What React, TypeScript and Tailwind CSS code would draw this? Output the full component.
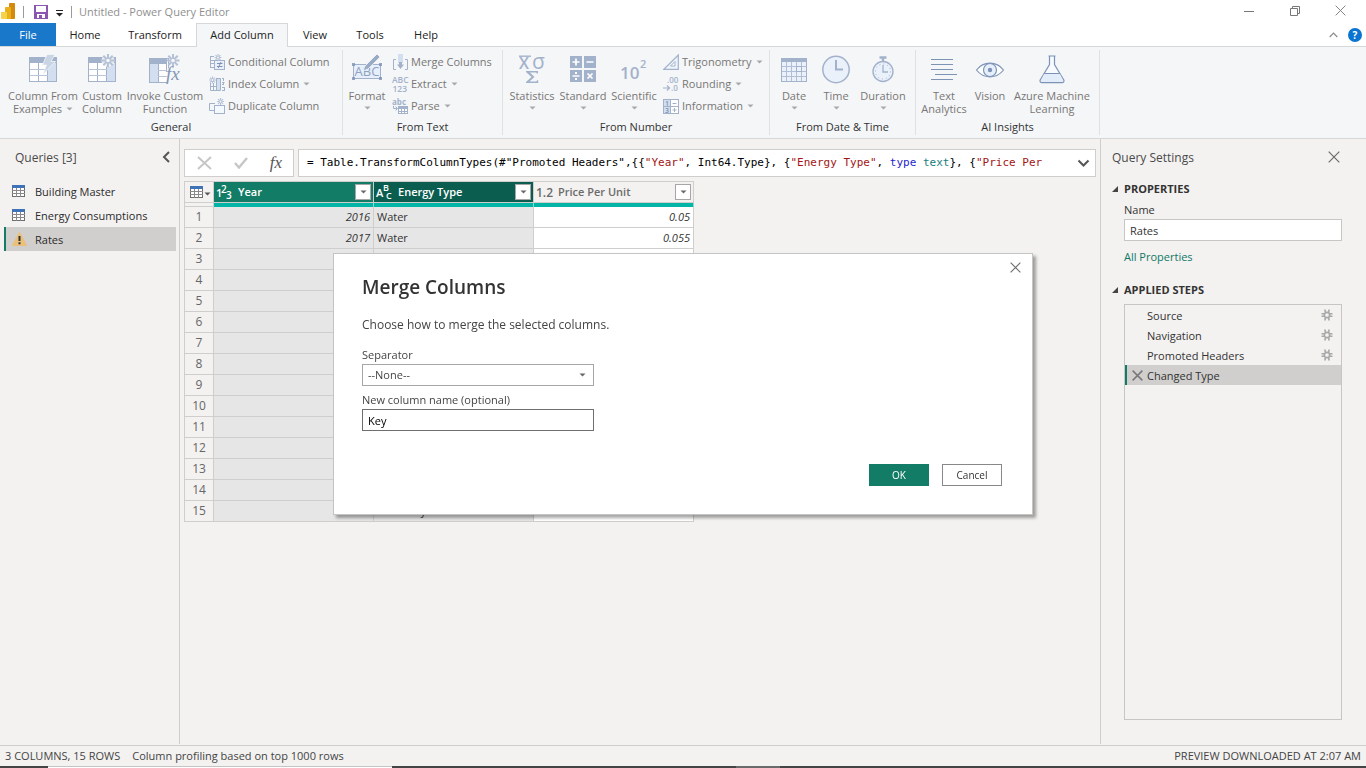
import type { ReactNode } from 'react';

const LINE = '#a3b2cb';
const TINT = '#d3deee';
const DEEP = '#7d93b5';

function Caret({ className = 'text-[#a8a8a8]' }: { className?: string }) {
  return (
    <svg width="7" height="4" viewBox="0 0 7 4" className={`shrink-0 ${className}`} aria-hidden="true">
      <path d="M0.5 0.5h6L3.5 3.6z" fill="currentColor" />
    </svg>
  );
}

function Burst({ x, y, r = 6.5 }: { x: number; y: number; r?: number }) {
  const d = r * 0.72;
  return (
    <g transform={`translate(${x} ${y})`}>
      <path
        d={`M0 ${-r}V${r}M${-r} 0H${r}M${-d} ${-d}L${d} ${d}M${d} ${-d}L${-d} ${d}`}
        stroke="#b4c1d6"
        strokeWidth={r > 4 ? 2 : 1.1}
        fill="none"
      />
      <circle r={r * 0.28} fill="#f4f6f8" />
    </g>
  );
}

function TableBase() {
  return (
    <>
      <rect x="0.5" y="3.5" width="27" height="24" fill="#fff" stroke={LINE} />
      <rect x="19" y="9" width="8" height="18" fill={TINT} />
      <rect x="0" y="3" width="28" height="6" fill={LINE} />
      <path d="M9.5 9v19M18.5 9v19" stroke={LINE} />
      <path d="M1 15.5h18M1 21.5h18" stroke="#b9c6da" />
    </>
  );
}

function ExamplesIcon() {
  return (
    <svg width="28" height="29" viewBox="0 0 28 29">
      <TableBase />
      <path d="M18 0.5h8l-4 7h4.5L14 20.5l3.5-9.5h-4z" fill="#c9d4e5" stroke="#f4f6f8" strokeWidth="0.8" />
    </svg>
  );
}
function CustomIcon() {
  return (
    <svg width="28" height="29" viewBox="0 0 28 29">
      <TableBase />
      <circle cx="20" cy="6.500" r="6.500" fill="#f4f6f8" opacity="0.850" />
      <Burst x={20} y={6.5} />
    </svg>
  );
}
function InvokeIcon() {
  return (
    <svg width="32" height="30" viewBox="0 0 32 30" className="overflow-visible">
      <rect x="0.500" y="4.500" width="19" height="24" fill="#fff" stroke={LINE} />
      <rect x="0" y="4" width="18" height="6" fill={LINE} />
      <rect x="1" y="10" width="8" height="18" fill={TINT} />
      <path d="M9.500 10v19M17.500 10v8" stroke={LINE} />
      <path d="M9 16.500h10M9 22.500h10" stroke="#b9c6da" />
      <Burst x={24} y={6.5} />
      <rect x="18" y="14" width="13" height="15.500" fill="#f4f6f8" opacity="0.800" />
      <text x="17" y="26" fontFamily="Liberation Serif, serif" fontStyle="italic" fontSize="19" fill="#8597b5">fx</text>
    </svg>
  );
}
function ConditionalIcon() {
  return (
    <svg width="16" height="16" viewBox="0 0 16 16">
      <path d="M5 2.500H1M1.500 2v11M1 6.500h4M1 9.500h4M1 13.500h4" stroke={LINE} fill="none" />
      <rect x="5.500" y="6.500" width="10" height="9" fill="#e9f0fa" stroke={LINE} />
      <path d="M8 9.500h5.500M8 12.500h5.500M12 8l-2.800 6" stroke={DEEP} fill="none" />
      <Burst x={9} y={3.5} r={3.4} />
    </svg>
  );
}
function IndexIcon() {
  return (
    <svg width="16" height="16" viewBox="0 0 16 16">
      <path d="M1.500 6.500v8h10v-12H7M1 10.500h10M4.500 7v8M7.500 3v12" stroke={LINE} fill="none" />
      <rect x="8" y="3" width="3" height="11" fill={TINT} />
      <path d="M13 2.500h2M14.500 2v3M13 6.500h2.500M13 8.500h2M14.500 6v3M13 11.500h2.500M13 14.500h2.500M15.500 11v4" stroke={LINE} fill="none" />
      <Burst x={3.5} y={4} r={3.4} />
    </svg>
  );
}
function DuplicateIcon() {
  return (
    <svg width="16" height="16" viewBox="0 0 16 16">
      <path d="M6 5.500H0.500v7H5" stroke={LINE} fill="none" />
      <rect x="5.500" y="7.500" width="10" height="8" fill="#f4f8ff" stroke={LINE} />
      <Burst x={11.5} y={3.5} r={3.4} />
    </svg>
  );
}
function FormatIcon() {
  return (
    <svg width="32" height="29" viewBox="0 0 32 29" className="overflow-visible">
      <rect x="2.500" y="10.500" width="27" height="14" fill="#e6effb" stroke={LINE} />
      <g fill={DEEP} opacity="0.8">
        <rect x="1" y="9" width="3" height="3" /><rect x="28" y="9" width="3" height="3" />
        <rect x="1" y="23" width="3" height="3" /><rect x="28" y="23" width="3" height="3" />
      </g>
      <text x="16" y="22" textAnchor="middle" fontFamily="Open Sans, sans-serif" fontSize="13" fill="#8fa2c0">ABC</text>
      <path d="M26 0l3 3-12 12-5 2 2-5z" fill="#9aabc6" stroke="#f4f6f8" strokeWidth="0.8" />
    </svg>
  );
}
function MergeIcon() {
  return (
    <svg width="17" height="16" viewBox="0 0 17 16">
      <path d="M4 5.500H1.500v10H4M13 5.500h2.500v10H13" stroke={LINE} fill="none" />
      <rect x="6" y="0" width="5" height="9" fill={TINT} />
      <path d="M8.500 15L5 10.500h2V8h3v2.500h2z" fill={LINE} />
    </svg>
  );
}
function ExtractIcon() {
  return (
    <svg width="17" height="16" viewBox="0 0 17 16" className="overflow-visible" fontFamily="Open Sans, sans-serif" fontSize="8.500" fontWeight="600" fill={LINE}>
      <text x="0" y="7">ABC</text>
      <text x="0.500" y="15.500">123</text>
    </svg>
  );
}
function ParseIcon() {
  return (
    <svg width="17" height="17" viewBox="0 0 17 17" className="overflow-visible">
      <text x="0" y="6.500" fontFamily="Open Sans, sans-serif" fontSize="8" fontWeight="700" fill={LINE}>abc</text>
      <path d="M1.500 8v2.500H5M3.500 8.500l2 2-2 2" stroke={LINE} fill="none" />
      <rect x="6.500" y="8.500" width="9" height="7" fill="#fff" stroke={LINE} />
      <rect x="6" y="8" width="10" height="3" fill={LINE} />
      <path d="M9.500 10v6M12.500 10v6M6 13.500h10" stroke={LINE} />
    </svg>
  );
}
function StatisticsIcon() {
  return (
    <svg width="30" height="30" viewBox="0 0 30 30" className="overflow-visible" fill={LINE} fontFamily="Open Sans, sans-serif">
      <path d="M2 2.200h12" stroke={LINE} strokeWidth="1.400" />
      <text x="2" y="15" fontSize="16" fontWeight="600">X</text>
      <text x="15" y="15" fontSize="21" fontWeight="500">σ</text>
      <path d="M9 17h12v2.500h-1.200l-.5-1H13l4.500 4.500-5 4.500h7l.5-1.200h1.200V29H9v-1l5.500-5L9 18z" />
    </svg>
  );
}
function StandardIcon() {
  return (
    <svg width="27" height="28" viewBox="0 0 27 28">
      <g fill={LINE}>
        <rect x="0" y="2" width="12" height="12" /><rect x="14" y="2" width="12" height="12" />
        <rect x="0" y="16" width="12" height="12" /><rect x="14" y="16" width="12" height="12" />
      </g>
      <path d="M6 4.500v7M2.500 8h7M16.500 8h7M2.500 22h7M17.500 19.500l5 5M22.500 19.500l-5 5" stroke="#fff" strokeWidth="1.700" />
      <path d="M5 18h2v2H5zM5 24h2v2H5z" fill="#fff" />
    </svg>
  );
}
function ScientificIcon() {
  return (
    <svg width="28" height="30" viewBox="0 0 28 30" className="overflow-visible" fill={LINE} fontFamily="Open Sans, sans-serif" fontWeight="600">
      <text x="0" y="25" fontSize="17">10</text>
      <text x="20" y="14" fontSize="11">2</text>
    </svg>
  );
}
function TrigIcon() {
  return (
    <svg width="16" height="16" viewBox="0 0 16 16">
      <path d="M15.300 1V15.400H0.800z" fill="#eef4fc" stroke={LINE} strokeWidth="1.200" />
      <path d="M12 7.500v4.500H7.500z" fill="#fff" stroke={LINE} />
    </svg>
  );
}
function RoundingIcon() {
  return (
    <svg width="16" height="16" viewBox="0 0 16 16" className="overflow-visible" fontFamily="Open Sans, sans-serif" fontSize="8" fontWeight="600" fill={LINE}>
      <text x="4" y="7">.00</text>
      <text x="8" y="15">.0</text>
      <path d="M0 12h6M4 9.500L6.500 12 4 14.500" stroke={LINE} strokeWidth="1.200" fill="none" />
    </svg>
  );
}
function InformationIcon() {
  return (
    <svg width="16" height="16" viewBox="0 0 16 16" className="overflow-visible">
      <rect x="0.500" y="1.500" width="15" height="14" fill="#fff" stroke={LINE} />
      <rect x="1" y="2" width="6" height="13" fill={TINT} />
      <path d="M7.500 1v15M0 8.500h16M9.500 5.500h4M9.500 12h4M11.500 10v4" stroke={LINE} />
      <text x="2" y="7.500" fontFamily="Open Sans, sans-serif" fontSize="7" fontWeight="600" fill={DEEP}>1</text>
      <text x="2" y="14.500" fontFamily="Open Sans, sans-serif" fontSize="7" fontWeight="600" fill={DEEP}>3</text>
    </svg>
  );
}
function DateIcon() {
  return (
    <svg width="26" height="29" viewBox="0 0 26 29">
      <rect x="0.500" y="4.500" width="25" height="23" fill="#eaf1fb" stroke={LINE} />
      <rect x="0" y="4" width="26" height="4" fill={LINE} />
      <path d="M5.500 8v19M10.500 8v19M15.500 8v19M20.500 8v19M1 12.500h24M1 17.500h24M1 22.500h24" stroke={LINE} opacity="0.800" />
      <rect x="15.500" y="12.500" width="5" height="5" fill="none" stroke={LINE} />
    </svg>
  );
}
function TimeIcon() {
  return (
    <svg width="28" height="30" viewBox="0 0 28 30">
      <circle cx="14" cy="15.500" r="13.200" fill="#eaf1fb" stroke={LINE} strokeWidth="1.500" />
      <path d="M14 6v9.500h7" stroke={LINE} strokeWidth="2" fill="none" />
    </svg>
  );
}
function DurationIcon() {
  return (
    <svg width="22" height="29" viewBox="0 0 22 29">
      <path d="M7.500 3.500h7M11 3v4" stroke={LINE} strokeWidth="2.400" />
      <circle cx="11" cy="17.500" r="10" fill="#eaf1fb" stroke={LINE} strokeWidth="1.400" />
      <circle cx="11" cy="17.500" r="7.500" fill="none" stroke={LINE} strokeDasharray="1 2.930" />
      <path d="M11 11v7h5" stroke={LINE} strokeWidth="1.300" fill="none" />
    </svg>
  );
}
function TextLinesIcon() {
  return (
    <svg width="28" height="28" viewBox="0 0 28 28">
      <path d="M1 5.500h22M1 10.500h22M1 15.500h22M5 20.500h22M1 25.500h22" stroke={DEEP} />
    </svg>
  );
}
function VisionIcon() {
  return (
    <svg width="30" height="30" viewBox="0 0 30 30">
      <path d="M1.500 16C5 11.500 9.500 9.200 15 9.200S25 11.500 28.500 16C25 20.500 20.500 22.800 15 22.800S5 20.500 1.500 16z" fill="#fff" stroke={DEEP} strokeWidth="1.200" />
      <circle cx="15" cy="16" r="6.500" fill="#e6effc" stroke={DEEP} strokeWidth="1.200" />
      <circle cx="15" cy="16" r="2.200" fill={DEEP} />
    </svg>
  );
}
function FlaskIcon() {
  return (
    <svg width="26" height="30" viewBox="0 0 26 30">
      <path d="M9.500 2h7M10.500 2v8.500L1.200 26c-.6 1.500.3 2.700 1.800 2.700h20c1.500 0 2.400-1.200 1.800-2.700L15.500 10.500V2" fill="#f7faff" stroke={DEEP} strokeWidth="1.200" />
      <path d="M5.200 19.500h15.600L24 26.500c.3 1-.2 1.500-1 1.500H3c-.8 0-1.300-.5-1-1.500z" fill="#e3edfa" />
      <path d="M5 19.500h16" stroke={DEEP} />
    </svg>
  );
}

function BigButton({ icon, lines, caret, width }: { icon: ReactNode; lines: string[]; caret?: boolean; width: string }) {
  return (
    <button type="button" className={`flex shrink-0 flex-col items-center whitespace-nowrap leading-[13px] ${width}`}>
      <span className="flex h-[35px] items-start justify-center" aria-hidden="true">{icon}</span>
      <span>{lines[0]}</span>
      <span className={`flex items-center gap-1 ${lines[1] ? 'h-[13px]' : 'h-[11px]'}`}>
        {lines[1]}
        {caret && <Caret />}
      </span>
    </button>
  );
}

function SmallButton({ icon, label, caret }: { icon: ReactNode; label: string; caret?: boolean }) {
  return (
    <button type="button" className="flex h-[22px] items-center whitespace-nowrap">
      <span className="w-[19px] shrink-0" aria-hidden="true">{icon}</span>
      <span>{label}</span>
      {caret && <span className="ml-1 flex"><Caret /></span>}
    </button>
  );
}

function Group({ title, width, children }: { title: string; width: string; children: ReactNode }) {
  return (
    <section className={`flex shrink-0 flex-col border-r border-[#dfe1e3] ${width}`}>
      <div className="flex h-[72px] items-start px-1 pt-1">{children}</div>
      <h2 className="text-center leading-4 text-[#333]">{title}</h2>
    </section>
  );
}

function SmallStack({ className, children }: { className?: string; children: ReactNode }) {
  return <div className={`-mt-[3px] flex h-[66px] flex-col ${className ?? ''}`}>{children}</div>;
}

function SheetIcon() {
  return (
    <svg width="14" height="13" viewBox="0 0 14 13" aria-hidden="true">
      <rect x="0.500" y="0.500" width="12" height="11" fill="#fff" stroke="#6e6e6e" />
      <rect x="0" y="0" width="13" height="3" fill="#3f73b8" />
      <path d="M4.500 3v9M8.500 3v9M0 5.500h13M0 8.500h13" stroke="#8a8a8a" />
    </svg>
  );
}
function WarningIcon() {
  return (
    <svg width="15" height="14" viewBox="0 0 15 14" aria-hidden="true">
      <path d="M7.500 0.800L14.300 13.200H0.700z" fill="#e9c07c" stroke="#e9c07c" strokeWidth="1.400" strokeLinejoin="round" />
      <path d="M7.500 4v5M7.500 10.200v2" stroke="#333" strokeWidth="2" />
    </svg>
  );
}
function CrossIcon({ size, color = '#6a6a6a', width = 1.2 }: { size: number; color?: string; width?: number }) {
  return (
    <svg width={size} height={size} viewBox="0 0 12 12" aria-hidden="true">
      <path d="M0.700 0.700l10.600 10.600M11.300 0.700L0.700 11.300" stroke={color} strokeWidth={width} fill="none" />
    </svg>
  );
}
function GearIcon() {
  return (
    <svg width="12" height="12" viewBox="0 0 12 12" aria-hidden="true">
      <circle cx="6" cy="6" r="2.700" stroke="#a9a9a9" strokeWidth="1.700" fill="none" />
      <path d="M3.800 0.500l.7 3M8.200 0.500l-.7 3M3.800 11.500l.7-3M8.200 11.500l-.7-3M0.500 4.700h3M0.500 7.300h3M8.500 4.700h3M8.500 7.300h3" stroke="#a9a9a9" strokeWidth="1.600" />
    </svg>
  );
}

function TitleBar() {
  return (
    <header className="flex h-[23px] items-center bg-white">
      <svg width="16" height="17" viewBox="0 0 16 17" className="ml-px shrink-0" aria-hidden="true">
        <rect x="8" y="0" width="6" height="16" rx="0.800" fill="#d48a0c" />
        <rect x="4" y="4" width="6" height="12" rx="0.800" fill="#e8b01a" />
        <rect x="0" y="9" width="6" height="7" rx="0.800" fill="#f6d24b" />
      </svg>
      <span className="ml-[6px] h-3 w-px bg-[#9a9a9a]" />
      <button type="button" aria-label="Save" className="ml-[10px]">
        <svg width="14" height="14" viewBox="0 0 14 14">
          <path d="M0 0h14v14H0z" fill="#8a56b0" />
          <path d="M2 1h10v6H2z" fill="#fff" />
          <path d="M3 9h8v4H3z" fill="#fff" />
          <path d="M5 10h3v3H5z" fill="#8a56b0" />
        </svg>
      </button>
      <button type="button" aria-label="Customize toolbar" className="ml-2 mt-[3px]">
        <svg width="7" height="7" viewBox="0 0 7 7"><path d="M0 0.500h7" stroke="#222" /><path d="M0 3h7L3.500 6.500z" fill="#222" /></svg>
      </button>
      <span className="ml-2 h-3 w-px bg-[#9a9a9a]" />
      <h1 className="ml-[7px] pt-px text-[11px] text-[#8f8f8f]">Untitled - Power Query Editor</h1>
      <div className="ml-auto flex items-center gap-[34px] pr-5 pb-[2px]">
        <button type="button" aria-label="Minimize">
          <svg width="12" height="12" viewBox="0 0 12 12"><path d="M1 6.500h10" stroke="#777" /></svg>
        </button>
        <button type="button" aria-label="Restore">
          <svg width="12" height="12" viewBox="0 0 12 12">
            <path d="M1.500 3.500h7v7h-7zM3.500 3V1.500h7v7H9" fill="none" stroke="#777" />
          </svg>
        </button>
        <button type="button" aria-label="Close"><CrossIcon size={11} color="#777" width={1} /></button>
      </div>
    </header>
  );
}

const tabs = [
  { label: 'File', width: 'w-[56px]' },
  { label: 'Home', width: 'w-[58px]' },
  { label: 'Transform', width: 'w-[82px]' },
  { label: 'Add Column', width: 'w-[92px]' },
  { label: 'View', width: 'w-[54px]' },
  { label: 'Tools', width: 'w-[56px]' },
  { label: 'Help', width: 'w-[56px]' },
];

function Tabs() {
  return (
    <nav className="flex h-[24px] items-stretch bg-white text-[11px] text-[#222]">
      {tabs.map((t) => {
        const tone =
          t.label === 'File'
            ? 'bg-[#1a78cb] text-white border-b border-[#d5d7d9] pt-[2px]'
            : t.label === 'Add Column'
              ? 'bg-[#f4f6f8] border border-b-0 border-[#d5d7d9]'
              : 'border-b border-[#d5d7d9] pt-[2px]';
        return (
          <button key={t.label} type="button" className={`shrink-0 ${t.width} ${tone}`}>
            {t.label}
          </button>
        );
      })}
      <div className="flex flex-1 items-center justify-end gap-[10px] border-b border-[#d5d7d9] pr-1">
        <button type="button" aria-label="Collapse ribbon">
          <svg width="9" height="6" viewBox="0 0 9 6"><path d="M0.700 5L4.500 1.200 8.300 5" stroke="#8a8a8a" strokeWidth="1.200" fill="none" /></svg>
        </button>
        <button type="button" aria-label="Help" className="size-[14px] rounded-full bg-[#0a74d1] text-[10px] leading-[14px] font-bold text-white">?</button>
      </div>
    </nav>
  );
}

function Ribbon() {
  return (
    <div className="flex h-[92px] overflow-hidden border-b border-[#d5d7d9] bg-[#f4f6f8] py-[3px] text-[11px] text-[#797675]">
      <Group title="General" width="w-[343px]">
        <BigButton width="w-[78px]" icon={<ExamplesIcon />} lines={['Column From', 'Examples']} caret />
        <BigButton width="w-[40px]" icon={<CustomIcon />} lines={['Custom', 'Column']} />
        <BigButton width="w-[86px]" icon={<InvokeIcon />} lines={['Invoke Custom', 'Function']} />
        <SmallStack className="ml-px">
          <SmallButton icon={<ConditionalIcon />} label="Conditional Column" />
          <SmallButton icon={<IndexIcon />} label="Index Column" caret />
          <SmallButton icon={<DuplicateIcon />} label="Duplicate Column" />
        </SmallStack>
      </Group>
      <Group title="From Text" width="w-[160px]">
        <BigButton width="w-[40px]" icon={<FormatIcon />} lines={['Format', '']} caret />
        <SmallStack className="ml-[5px]">
          <SmallButton icon={<MergeIcon />} label="Merge Columns" />
          <SmallButton icon={<ExtractIcon />} label="Extract" caret />
          <SmallButton icon={<ParseIcon />} label="Parse" caret />
        </SmallStack>
      </Group>
      <Group title="From Number" width="w-[267px]">
        <BigButton width="w-[50px]" icon={<StatisticsIcon />} lines={['Statistics', '']} caret />
        <BigButton width="w-[52px]" icon={<StandardIcon />} lines={['Standard', '']} caret />
        <BigButton width="w-[50px]" icon={<ScientificIcon />} lines={['Scientific', '']} caret />
        <SmallStack className="ml-1">
          <SmallButton icon={<TrigIcon />} label="Trigonometry" caret />
          <SmallButton icon={<RoundingIcon />} label="Rounding" caret />
          <SmallButton icon={<InformationIcon />} label="Information" caret />
        </SmallStack>
      </Group>
      <Group title="From Date & Time" width="w-[146px]">
        <BigButton width="w-[40px]" icon={<DateIcon />} lines={['Date', '']} caret />
        <BigButton width="w-[44px]" icon={<TimeIcon />} lines={['Time', '']} caret />
        <BigButton width="w-[50px]" icon={<DurationIcon />} lines={['Duration', '']} caret />
      </Group>
      <Group title="AI Insights" width="w-[184px]">
        <BigButton width="w-[48px]" icon={<TextLinesIcon />} lines={['Text', 'Analytics']} />
        <BigButton width="w-[44px]" icon={<VisionIcon />} lines={['Vision', '']} />
        <BigButton width="w-[80px]" icon={<FlaskIcon />} lines={['Azure Machine', 'Learning']} />
      </Group>
    </div>
  );
}

function QueriesPane() {
  const queries = ['Building Master', 'Energy Consumptions', 'Rates'];
  return (
    <aside className="flex w-[180px] shrink-0 flex-col border-r border-[#cfcecc]">
      <div className="flex h-9 items-center justify-between pr-2 pl-[15px]">
        <h2 className="pt-[2px] text-[12px] text-[#4a4a4a]">Queries [3]</h2>
        <button type="button" aria-label="Collapse queries">
          <svg width="9" height="12" viewBox="0 0 9 12"><path d="M7 1L2 6l5 5" stroke="#555" strokeWidth="2" fill="none" /></svg>
        </button>
      </div>
      <ul className="mt-[4px] mr-[3px] ml-1 text-[11px] text-[#2b2b2b]">
        {queries.map((q) => (
          <li key={q}>
            <button
              type="button"
              className={`flex h-6 w-full items-center border-l-2 pl-[6px] ${q === 'Rates' ? 'border-[#127c66] bg-[#d0cfcd]' : 'border-transparent'}`}
            >
              <span className="w-[23px]">{q === 'Rates' ? <WarningIcon /> : <SheetIcon />}</span>
              <span className="pt-[2px]">{q}</span>
            </button>
          </li>
        ))}
      </ul>
    </aside>
  );
}

function FormulaBar() {
  return (
    <div className="flex h-7 gap-1">
      <div className="flex w-[110px] shrink-0 items-center justify-between border border-[#cfcecc] bg-white pr-[11px] pl-[12px]">
        <button type="button" aria-label="Cancel formula">
          <svg width="15" height="14" viewBox="0 0 15 14"><path d="M1 1l13 12M14 1L1 13" stroke="#c6c6c6" strokeWidth="2" /></svg>
        </button>
        <button type="button" aria-label="Accept formula">
          <svg width="14" height="12" viewBox="0 0 14 12"><path d="M1 6l4 4.500L13 1" stroke="#c6c6c6" strokeWidth="2.400" fill="none" /></svg>
        </button>
        <button type="button" aria-label="Insert step" className="font-['Liberation_Serif',serif] text-[17px] leading-5 text-[#555] italic">fx</button>
      </div>
      <div className="flex min-w-0 flex-1 items-center justify-between border border-[#cfcecc] bg-white pr-[5px] pl-2">
        <code className="overflow-hidden pt-px font-['DejaVu_Sans_Mono',monospace] text-[11px] whitespace-pre text-black">
          {'= Table.TransformColumnTypes(#"Promoted Headers",{{'}
          <span className="text-[#a31515]">"Year"</span>
          {', Int64.Type}, {'}
          <span className="text-[#a31515]">"Energy Type"</span>
          {', '}
          <span className="text-[#1f1fd0]">type</span> <span className="text-[#16807c]">text</span>
          {'}, {'}
          <span className="text-[#a31515]">"Price Per</span>
        </code>
        <button type="button" aria-label="Expand formula bar" className="shrink-0">
          <svg width="13" height="9" viewBox="0 0 13 9"><path d="M1.500 1.500l5 5 5-5" stroke="#555" strokeWidth="2" fill="none" /></svg>
        </button>
      </div>
    </div>
  );
}

type Row = { year?: string; type?: string; price?: string };

const ROW_COUNT = 15;
const loaded: Record<number, Row> = {
  1: { year: '2016', type: 'Water', price: '0.05' },
  2: { year: '2017', type: 'Water', price: '0.055' },
  15: { type: 'Electricity' },
};
const rows: Row[] = Array.from({ length: ROW_COUNT }, (_, i) => loaded[i + 1] ?? {});

const columns = [
  { name: 'Year', tone: 'bg-[#127c66] text-white' },
  { name: 'Energy Type', tone: 'bg-[#0b5d50] text-white' },
  { name: 'Price Per Unit', tone: 'bg-[#f3f2f1] text-[#6b6b6b]' },
];

function TypeIcon({ index }: { index: number }) {
  return (
    <svg width="19" height="18" viewBox="0 0 19 18" className="overflow-visible" fontFamily="Open Sans, sans-serif" fontWeight="600" fill="currentColor" aria-hidden="true">
      {index === 0 && (<><text x="0" y="14" fontSize="11">1</text><text x="5" y="10" fontSize="10">2</text><text x="10" y="16" fontSize="10">3</text></>)}
      {index === 1 && (<><text x="0" y="14" fontSize="11">A</text><text x="7" y="8" fontSize="9">B</text><text x="10" y="16" fontSize="9">C</text></>)}
      {index === 2 && <text x="0" y="14" fontSize="12">1.2</text>}
    </svg>
  );
}

function DataGrid() {
  return (
    <table className="mt-1 w-[510px] table-fixed border-separate border-spacing-0 border-t border-l border-[#cfcecc] text-[11px] text-[#333]">
      <colgroup>
        <col className="w-[29px]" />
        <col className="w-[160px]" />
        <col className="w-[160px]" />
        <col className="w-[160px]" />
      </colgroup>
      <thead>
        <tr className="h-[21px]">
          <th className="border-r border-b border-[#cfcecc] p-0">
            <button type="button" aria-label="Table options" className="flex items-center pl-[5px]">
              <SheetIcon />
              <Caret className="mt-1 text-[#555]" />
            </button>
          </th>
          {columns.map((c, i) => (
            <th key={c.name} scope="col" className={`border-r border-b border-[#cfcecc] p-0 ${c.tone}`}>
              <div className="flex h-5 items-center pr-[2px] pl-[2px]">
                <TypeIcon index={i} />
                <span className="ml-[3px] pt-px font-semibold">{c.name}</span>
                <button type="button" aria-label={`Filter ${c.name}`} className="ml-auto flex size-4 items-center justify-center border border-[#a6a6a6] bg-white">
                  <Caret className="text-[#6a6a6a]" />
                </button>
              </div>
            </th>
          ))}
        </tr>
      </thead>
      <tbody>
        <tr className="h-1">
          <td className="border-r border-b border-[#cfcecc] p-0" />
          <td className="border-r border-[#8fd6cd] bg-[#03b5a6] p-0" />
          <td className="border-r border-[#8fd6cd] bg-[#03b5a6] p-0" />
          <td className="border-r border-[#8fd6cd] bg-[#03b5a6] p-0" />
        </tr>
        {rows.map(({ year, type, price }, i) => (
          <tr key={i} className="h-[21px] leading-5">
            <th scope="row" className="border-r border-b border-[#cfcecc] p-0 text-[12px] font-normal text-[#666]">{i + 1}</th>
            <td className="border-r border-b border-[#cfcecc] bg-[#e6e6e6] p-0 pr-[3px] text-right italic">{year}</td>
            <td className="border-r border-b border-[#cfcecc] bg-[#e6e6e6] p-0 pl-[3px]">{type}</td>
            <td className="border-r border-b border-[#cfcecc] bg-white p-0 pr-[3px] text-right italic">{price}</td>
          </tr>
        ))}
      </tbody>
    </table>
  );
}

function SectionTitle({ children }: { children: ReactNode }) {
  return (
    <h3 className="flex h-5 items-center text-[11px] font-bold text-[#333]">
      <svg width="6" height="6" viewBox="0 0 6 6" className="mr-[6px]" aria-hidden="true"><path d="M6 0v6H0z" fill="#444" /></svg>
      <span className="pt-px">{children}</span>
    </h3>
  );
}

function SettingsPane() {
  const steps = ['Source', 'Navigation', 'Promoted Headers', 'Changed Type'];
  return (
    <aside className="flex w-[266px] shrink-0 flex-col border-l border-[#cfcecc] pl-[11px] text-[11px] text-[#333]">
      <div className="flex h-9 items-center justify-between pr-[26px]">
        <h2 className="pt-[2px] text-[12px] text-[#4a4a4a]">Query Settings</h2>
        <button type="button" aria-label="Close settings"><CrossIcon size={12} /></button>
      </div>
      <div className="mt-1"><SectionTitle>PROPERTIES</SectionTitle></div>
      <div className="mr-6 ml-3 flex flex-col">
        <label htmlFor="query-name" className="flex h-5 items-center pt-[2px]">Name</label>
        <input id="query-name" defaultValue="Rates" className="h-[22px] w-full border border-[#c8c6c4] bg-white px-[5px] outline-none" />
        <a href="#properties" className="mt-[6px] leading-5 text-[#117865]">All Properties</a>
      </div>
      <div className="mt-[13px]"><SectionTitle>APPLIED STEPS</SectionTitle></div>
      <ul className="mt-1 mr-6 mb-6 ml-3 flex-1 border border-[#c8c6c4]">
        {steps.map((s) => {
          const on = s === 'Changed Type';
          return (
            <li key={s} className={`flex h-5 items-center border-l-2 pr-2 pl-[5px] ${on ? 'border-[#127c66] bg-[#d0cfcd]' : 'border-transparent'}`}>
              <span className="flex w-[15px]">
                {on && (
                  <button type="button" aria-label="Delete step"><CrossIcon size={11} color="#777" width={1.6} /></button>
                )}
              </span>
              <span className="flex-1 pt-[2px]">{s}</span>
              {!on && <button type="button" aria-label={`Edit ${s}`}><GearIcon /></button>}
            </li>
          );
        })}
      </ul>
    </aside>
  );
}

function MergeDialog() {
  return (
    <div className="fixed inset-0 flex items-center justify-center">
      <div
        role="dialog"
        aria-labelledby="merge-title"
        className="relative flex w-[700px] flex-col border border-[#c4c4c4] bg-white px-7 pt-5 pb-7 text-[11px] text-[#444] shadow-[3px_3px_3px_rgba(0,0,0,0.35)]"
      >
        <button type="button" aria-label="Close dialog" className="absolute top-2 right-[11px]"><CrossIcon size={11} /></button>
        <h2 id="merge-title" className="text-[19px] leading-[26px] font-semibold text-[#333]">Merge Columns</h2>
        <p className="mt-[17px] text-[12px] leading-4">Choose how to merge the selected columns.</p>
        <label htmlFor="separator" className="mt-[14px] leading-4">Separator</label>
        <div className="relative mt-px h-[22px] w-[232px]">
          <select id="separator" className="h-full w-full appearance-none border border-[#a6a6a6] bg-white px-[5px] pt-px outline-none">
            <option>--None--</option>
          </select>
          <span className="pointer-events-none absolute top-[9px] right-2"><Caret className="text-[#666]" /></span>
        </div>
        <label htmlFor="column-name" className="mt-[6px] leading-4">New column name (optional)</label>
        <input id="column-name" defaultValue="Key" className="mt-px h-[22px] w-[232px] border border-[#6e6e6e] bg-white px-[5px] pt-px text-black outline-none" />
        <div className="mt-[33px] flex justify-end gap-[13px] pr-[2px] text-[10px]">
          <button type="button" className="h-[22px] w-[60px] bg-[#127c66] pt-px text-white">OK</button>
          <button type="button" className="h-[22px] w-[60px] border border-[#8a8886] pt-px text-[#333]">Cancel</button>
        </div>
      </div>
    </div>
  );
}

export default function App() {
  return (
    <div className="flex min-h-screen flex-col bg-[#f3f2f1] font-['Open_Sans','Noto_Sans',sans-serif]">
      <TitleBar />
      <Tabs />
      <Ribbon />
      <div className="flex flex-1 pb-px">
        <QueriesPane />
        <main className="min-w-0 flex-1 px-1 pt-[10px]">
          <FormulaBar />
          <DataGrid />
        </main>
        <SettingsPane />
      </div>
      <footer>
        <div className="flex h-[21px] items-center gap-3 border-t border-[#cfcecc] px-[5px] pt-px text-[11px] whitespace-nowrap text-[#444]">
          <span>3 COLUMNS, 15 ROWS</span>
          <span>Column profiling based on top 1000 rows</span>
          <span className="ml-auto">PREVIEW DOWNLOADED AT 2:07 AM</span>
        </div>
        <div className="flex h-[2px] bg-[#444]">
          <span className="ml-12 w-[344px] border-t border-[#c4c4c4] bg-white" />
          <span className="ml-[344px] w-11 bg-[#6a6a6a]" />
        </div>
      </footer>
      <MergeDialog />
    </div>
  );
}
